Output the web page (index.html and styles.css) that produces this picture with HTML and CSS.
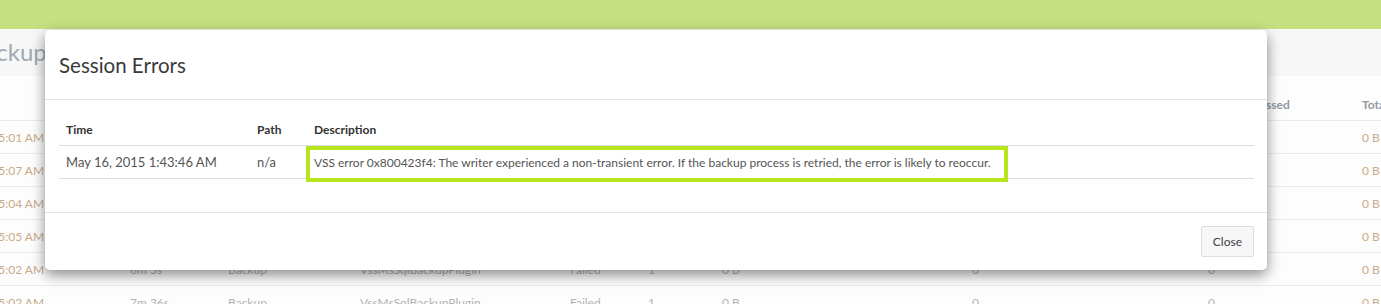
FILE: index.html
```html
<!DOCTYPE html>
<html lang="en">
<head>
    <meta charset="UTF-8">
    <title>Session Errors</title>
    <link rel="stylesheet" href="styles.css">
</head>
<body>
    <div class="topbar"></div>

    <div class="page">
        <div class="page-title">Backup</div>
        <table class="sessions">
            <colgroup>
                <col style="width: 225px">
                <col style="width: 98px">
                <col style="width: 132px">
                <col style="width: 210px">
                <col style="width: 78px">
                <col style="width: 74px">
                <col style="width: 250px">
                <col style="width: 236px">
                <col style="width: 154px">
                <col style="width: 120px">
            </colgroup>
            <thead>
                <tr>
                    <th>Start Time</th><th>Duration</th><th>Type</th><th>Plugin</th><th>Status</th>
                    <th>Errors</th><th>Size</th><th>Files Scanned</th><th>Files Processed</th><th>Total</th>
                </tr>
            </thead>
            <tbody>
                <tr><td><a>May 16, 2015 1:45:01 AM</a></td><td>6m 2s</td><td>Backup</td><td>VssMsSqlBackupPlugin</td><td>Failed</td><td>1</td><td>0 B</td><td>0</td><td>0</td><td><a>0 B</a></td></tr>
                <tr><td><a>May 15, 2015 1:45:07 AM</a></td><td>6m 8s</td><td>Backup</td><td>VssMsSqlBackupPlugin</td><td>Failed</td><td>1</td><td>0 B</td><td>0</td><td>0</td><td><a>0 B</a></td></tr>
                <tr><td><a>May 14, 2015 1:45:04 AM</a></td><td>6m 4s</td><td>Backup</td><td>VssMsSqlBackupPlugin</td><td>Failed</td><td>1</td><td>0 B</td><td>0</td><td>0</td><td><a>0 B</a></td></tr>
                <tr><td><a>May 13, 2015 1:45:05 AM</a></td><td>6m 1s</td><td>Backup</td><td>VssMsSqlBackupPlugin</td><td>Failed</td><td>1</td><td>0 B</td><td>0</td><td>0</td><td><a>0 B</a></td></tr>
                <tr><td><a>May 12, 2015 1:45:02 AM</a></td><td>6m 5s</td><td>Backup</td><td>VssMsSqlBackupPlugin</td><td>Failed</td><td>1</td><td>0 B</td><td>0</td><td>0</td><td><a>0 B</a></td></tr>
                <tr><td><a>May 11, 2015 1:45:02 AM</a></td><td>7m 36s</td><td>Backup</td><td>VssMsSqlBackupPlugin</td><td>Failed</td><td>1</td><td>0 B</td><td>0</td><td>0</td><td><a>0 B</a></td></tr>
            </tbody>
        </table>
    </div>

    <div class="modal">
        <div class="modal-header">
            <h4>Session Errors</h4>
        </div>
        <div class="modal-body">
            <table class="errors">
                <thead>
                    <tr>
                        <th class="col-time">Time</th>
                        <th class="col-path">Path</th>
                        <th>Description</th>
                    </tr>
                </thead>
                <tbody>
                    <tr>
                        <td>May 16, 2015 1:43:46 AM</td>
                        <td>n/a</td>
                        <td class="desc">VSS error 0x800423f4: The writer experienced a non-transient error. If the backup process is retried, the error is likely to reoccur.<span class="highlight"></span></td>
                    </tr>
                </tbody>
            </table>
        </div>
        <div class="modal-footer">
            <button>Close</button>
        </div>
    </div>
</body>
</html>
```

FILE: styles.css
```css
body {
    margin: 0;
    font-family: Lato, "Open Sans", sans-serif;
    font-size: 12px;
    background: #fdfdfd;
    overflow: hidden;
}
.topbar {
    height: 29px;
    background: #c5e07f;
}
.page {
    margin-left: -103px;
}
.page-title {
    height: 47px;
    line-height: 46px;
    background: #f7f7f7;
    color: #9fa9b5;
    font-size: 24px;
    padding-left: 72px;
}
.sessions {
    width: 1577px;
    border-collapse: collapse;
    table-layout: fixed;
    margin-top: 12px;
    white-space: nowrap;
}
.sessions th,
.sessions td {
    padding: 0 8px;
    height: 32px;
    text-align: left;
    overflow: hidden;
}
.sessions th {
    color: #8e98a4;
    font-weight: bold;
    border-bottom: 1px solid #ececec;
}
.sessions td {
    color: #b3b3b3;
    border-bottom: 1px solid #ececec;
}
.sessions a {
    color: #c8ab8a;
}

.modal {
    position: absolute;
    top: 30px;
    left: 45px;
    width: 1222px;
    background: #fff;
    border-radius: 5px;
    box-shadow: 0 5px 14px rgba(0, 0, 0, 0.45);
    color: #333;
}
.modal-header {
    padding: 0 14px;
    height: 69px;
    border-bottom: 1px solid #e5e5e5;
}
.modal-header h4 {
    margin: 0;
    line-height: 70px;
    font-size: 20.5px;
    font-weight: normal;
    color: #3a3a3a;
}
.modal-body {
    padding: 14px 13px 33px 14px;
}
.errors {
    width: 100%;
    border-collapse: collapse;
}
.errors th,
.errors td {
    text-align: left;
    padding: 0 7px;
}
.errors th {
    height: 31px;
    border-bottom: 1px solid #ddd;
    font-weight: bold;
    color: #333;
}
.errors td {
    height: 32px;
    border-bottom: 1px solid #ddd;
    color: #555;
    font-size: 13px;
}
.errors td.desc {
    font-size: 12px;
}
.col-time {
    width: 177px;
}
.col-path {
    width: 43px;
}
.desc {
    position: relative;
}
.highlight {
    position: absolute;
    top: 0;
    left: -1px;
    width: 694px;
    height: 28px;
    border: 4px solid #b5e61d;
}
.modal-footer {
    border-top: 1px solid #e5e5e5;
    padding: 13px 13px 13px 0;
    display: flex;
    justify-content: flex-end;
}
.modal-footer button {
    font-family: inherit;
    font-size: 12px;
    color: #444;
    background: #f7f7f7;
    border: 1px solid #ddd;
    border-radius: 2px;
    height: 31px;
    padding: 0 11px;
}
```
